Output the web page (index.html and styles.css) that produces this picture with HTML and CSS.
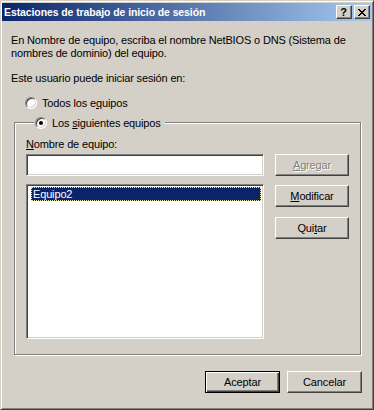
FILE: index.html
```html
<!DOCTYPE html>
<html lang="es">

<head>
    <meta charset="UTF-8">
    <title>Estaciones de trabajo de inicio de sesión</title>
    <link rel="stylesheet" href="styles.css">
</head>

<body>
    <div class="window">
        <div class="titlebar">
            <span class="title">Estaciones de trabajo de inicio de sesión</span>
            <div class="caption-btns">
                <span class="cap-btn help">?</span>
                <span class="cap-btn close">
                    <svg width="8" height="7" viewBox="0 0 8 7">
                        <path d="M0 0h2v1h-2zM6 0h2v1h-2zM1 1h2v1h-2zM5 1h2v1h-2zM2 2h4v1h-4zM3 3h2v1h-2zM2 4h4v1h-4zM1 5h2v1h-2zM5 5h2v1h-2zM0 6h2v1h-2zM6 6h2v1h-2z" fill="#000"/>
                    </svg>
                </span>
            </div>
        </div>

        <div class="content">
            <p class="intro">En Nombre de equipo, escriba el nombre NetBIOS o DNS (Sistema de<br>nombres de dominio) del equipo.</p>
            <p class="prompt">Este usuario puede iniciar sesión en:</p>

            <div class="radio-row first">
                <span class="radio"></span>
                <span>Todos los e<u>q</u>uipos</span>
            </div>

            <fieldset class="group">
                <legend class="radio-row">
                    <span class="radio checked"></span>
                    <span>Los <u>s</u>iguientes equipos</span>
                </legend>

                <div class="group-body">
                    <div class="left">
                        <div class="field-label"><u>N</u>ombre de equipo:</div>
                        <div class="edit"></div>
                        <div class="listbox">
                            <div class="item selected">Equipo2</div>
                        </div>
                    </div>
                    <div class="side">
                        <button class="btn" disabled><u>A</u>gregar</button>
                        <button class="btn"><u>M</u>odificar</button>
                        <button class="btn quitar">Qui<u>t</u>ar</button>
                    </div>
                </div>
            </fieldset>

            <div class="footer">
                <button class="btn default">Aceptar</button>
                <button class="btn">Cancelar</button>
            </div>
        </div>
    </div>
</body>

</html>
```

FILE: styles.css
```css
body {
    margin: 0;
    background: #d4d0c8;
    font-family: "Liberation Sans", Arial, sans-serif;
    font-size: 11px;
    letter-spacing: -0.15px;
    color: #000;
}

.window {
    box-sizing: border-box;
    width: 374px;
    height: 410px;
    padding: 1px;
    background: #d4d0c8;
    border: 1px solid;
    border-color: #d4d0c8 #404040 #404040 #d4d0c8;
    box-shadow: inset 1px 1px #fff, inset -1px -1px #808080;
    display: flex;
    flex-direction: column;
}

.titlebar {
    height: 18px;
    margin: 1px 0 0 0;
    background: linear-gradient(to right, #0a246a, #a6caf0);
    display: flex;
    align-items: center;
    justify-content: space-between;
}

.title {
    color: #fff;
    font-weight: bold;
    font-size: 10.5px;
    padding-left: 2px;
    letter-spacing: -0.1px;
}

.caption-btns {
    display: flex;
    gap: 2px;
    margin-right: 2px;
}

.cap-btn {
    box-sizing: border-box;
    width: 16px;
    height: 14px;
    background: #d4d0c8;
    border: 1px solid;
    border-color: #fff #404040 #404040 #fff;
    box-shadow: inset -1px -1px #808080;
    display: flex;
    align-items: center;
    justify-content: center;
}

.help {
    font-weight: bold;
    font-size: 11px;
    line-height: 1;
    padding-right: 1px;
}

.close svg {
    display: block;
    margin-right: 1px;
}

.content {
    flex: 1;
    padding: 0 9px;
}

.intro,
.prompt {
    margin: 0;
    line-height: 13px;
}

.intro {
    margin-top: 13px;
}

.prompt {
    margin-top: 12px;
}

.radio-row {
    display: flex;
    align-items: center;
    gap: 5px;
    height: 13px;
}

.radio-row.first {
    margin-top: 11px;
    padding-left: 14px;
}

.radio {
    box-sizing: border-box;
    width: 12px;
    height: 12px;
    border-radius: 50%;
    background: #fff;
    border: 1px solid;
    border-color: #808080 #fff #fff #808080;
    box-shadow: inset 1px 1px #404040, inset -1px -1px #d4d0c8;
    position: relative;
    flex: none;
}

.radio.checked::after {
    content: "";
    position: absolute;
    left: 3px;
    top: 3px;
    width: 4px;
    height: 4px;
    border-radius: 50%;
    background: #000;
}

.group {
    margin: 7px 0 0 3px;
    width: 347px;
    box-sizing: border-box;
    padding: 0 10px 15px 11px;
    border: 1px solid #808080;
    box-shadow: inset 1px 1px #fff, 1px 1px #fff;
}

.group legend {
    margin-left: 8px;
    padding: 0 4px 0 1px;
    background: #d4d0c8;
}

.group-body {
    display: grid;
    grid-template-columns: 238px 74px;
    column-gap: 11px;
    margin-top: 9px;
}

.field-label {
    line-height: 13px;
    margin-bottom: 3px;
}

.edit,
.listbox {
    box-sizing: border-box;
    background: #fff;
    border: 1px solid;
    border-color: #808080 #fff #fff #808080;
    box-shadow: inset 1px 1px #404040, inset -1px -1px #d4d0c8;
}

.edit {
    height: 22px;
}

.listbox {
    margin-top: 8px;
    height: 155px;
    padding: 2px 2px 2px 4px;
}

.item {
    height: 14px;
    line-height: 14px;
    padding-left: 2px;
}

.item.selected {
    background: #0a246a;
    color: #fff;
    outline: 1px dotted #e8e4b0;
    outline-offset: -1px;
}

.side {
    display: flex;
    flex-direction: column;
    gap: 9px;
    margin-top: 16px;
}

.btn {
    box-sizing: border-box;
    width: 74px;
    height: 22px;
    padding: 0;
    background: #d4d0c8;
    border: 1px solid;
    border-color: #fff #404040 #404040 #fff;
    box-shadow: inset -1px -1px #808080;
    font-family: "Liberation Sans", Arial, sans-serif;
    font-size: 11px;
    letter-spacing: -0.15px;
    color: #000;
}

.btn:disabled {
    color: #808080;
    text-shadow: 1px 1px #fff;
}

.quitar {
    margin-top: 1px;
}

.footer {
    display: flex;
    justify-content: flex-end;
    gap: 7px;
    margin-top: 16px;
    padding-right: 1px;
}

.footer .btn {
    width: 75px;
    height: 22px;
}

.btn.default {
    border: 1px solid #000;
    box-shadow: inset 1px 1px #fff, inset -1px -1px #404040, inset -2px -2px #808080;
}
```
